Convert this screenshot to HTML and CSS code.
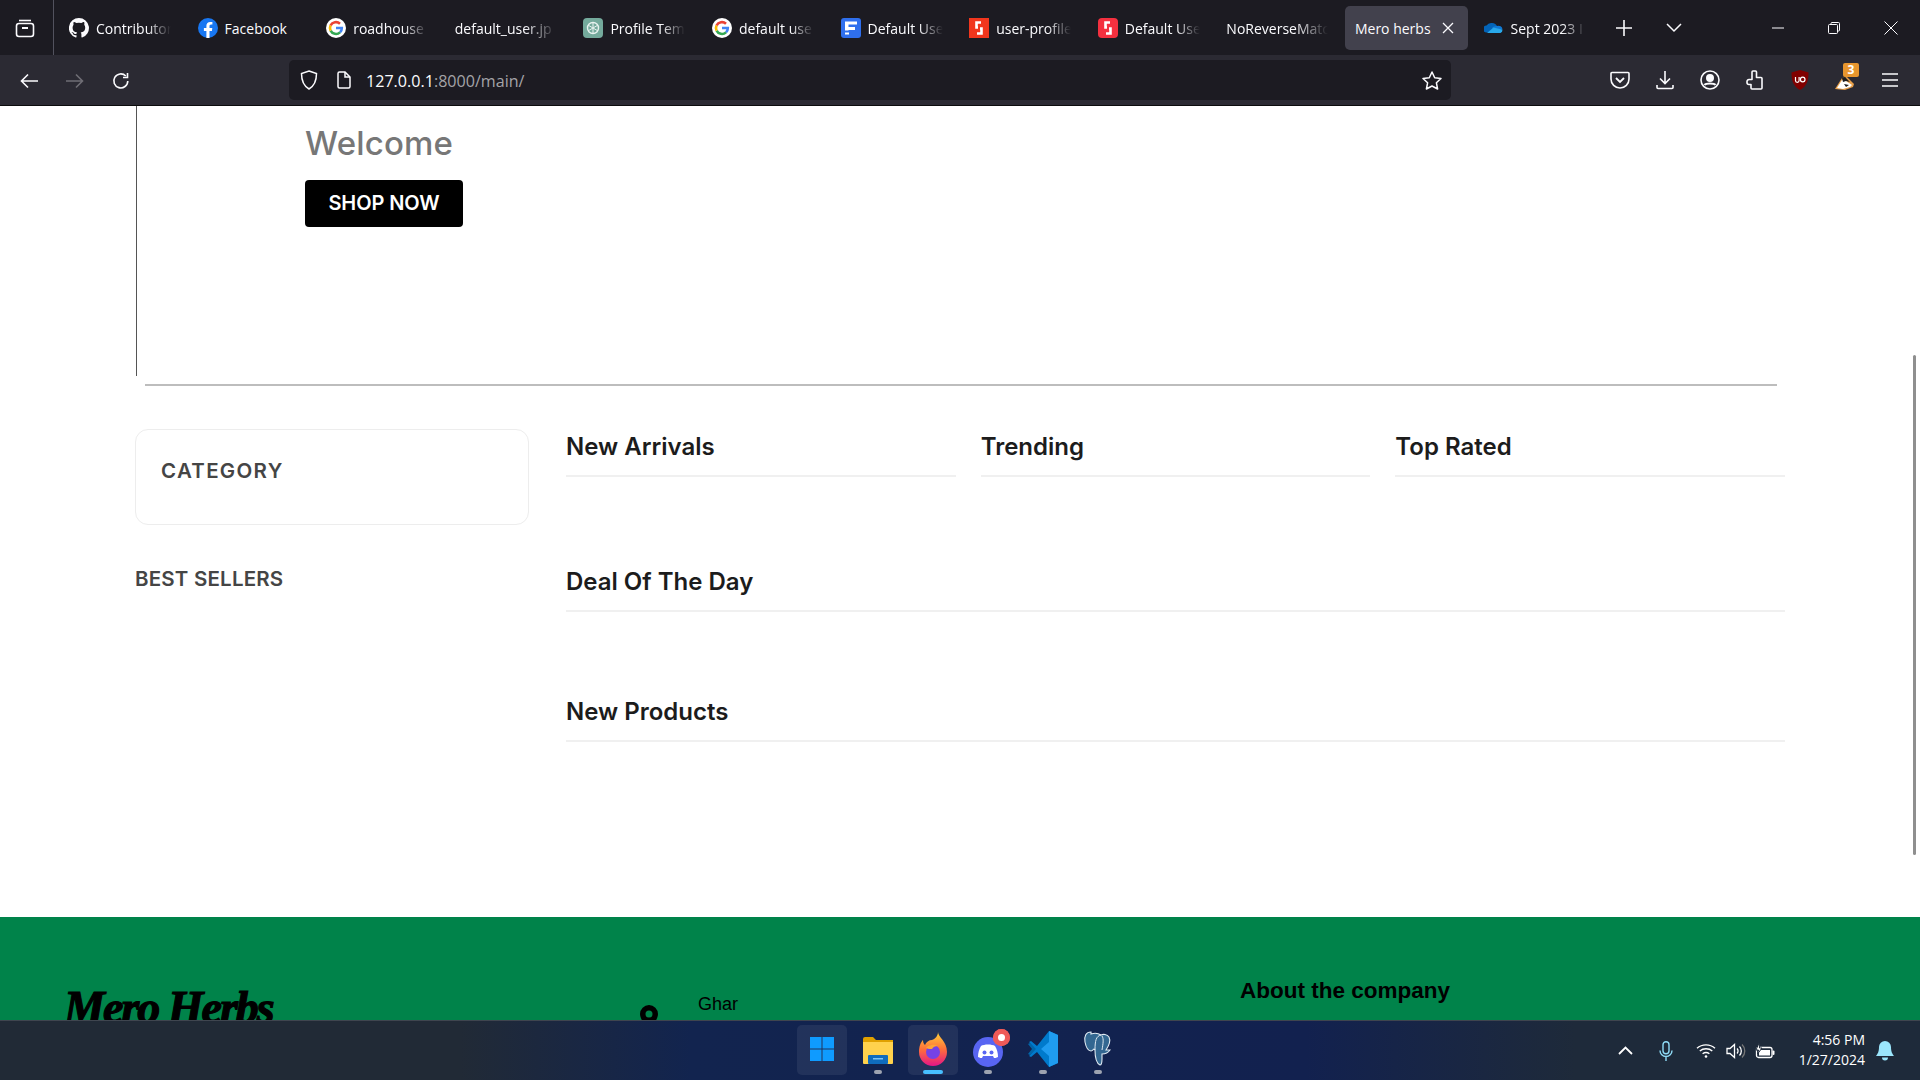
FILE: index.html
```html
<!DOCTYPE html>
<html lang="en">
<head>
<meta charset="utf-8">
<title>Mero herbs</title>
<link rel="stylesheet" href="styles.css">
</head>
<body>
<div class="tabbar">
  <div class="tabs-btn"><svg width="20" height="20" viewBox="0 0 20 20" fill="none" stroke="#fbfbfe" stroke-width="1.6"><path d="M4 2.500h12"/><rect x="1.500" y="5.500" width="17" height="13" rx="2.500"/><path d="M7 10h6" stroke-width="2"/></svg></div>
  <div class="tabs">
    <div class="tab"><svg class="fav" viewBox="0 0 20 20"><path fill="#fbfbfe" d="M10 0a10 10 0 0 0-3.200 19.500c.5.100.7-.2.7-.5v-1.800c-2.800.6-3.400-1.200-3.400-1.200-.4-1.200-1.100-1.500-1.100-1.500-.9-.6.100-.6.100-.6 1 .1 1.500 1 1.500 1 .9 1.500 2.300 1.100 2.900.8.100-.6.300-1.100.6-1.300-2.200-.3-4.500-1.100-4.500-4.900 0-1.100.4-2 1-2.700-.1-.3-.4-1.300.1-2.700 0 0 .8-.3 2.700 1a9.400 9.400 0 0 1 5 0c1.900-1.300 2.700-1 2.700-1 .5 1.400.2 2.400.1 2.700.6.7 1 1.600 1 2.700 0 3.800-2.300 4.600-4.500 4.900.4.300.7.900.7 1.900V19c0 .3.200.6.700.5A10 10 0 0 0 10 0z"/></svg><span class="tab-label">Contributor</span></div>
    <div class="tab"><svg class="fav" viewBox="0 0 20 20"><circle cx="10" cy="10" r="10" fill="#1877f2"/><path fill="#fff" d="M13.900 12.900l.4-2.900h-2.800V8.100c0-.8.4-1.600 1.600-1.600h1.300V4.100s-1.100-.2-2.200-.2c-2.300 0-3.800 1.400-3.800 3.900V10H5.900v2.900h2.500V20h3.100v-7.100z"/></svg><span class="tab-label tab-label-full">Facebook</span></div>
    <div class="tab"><svg class="fav" viewBox="0 0 20 20"><circle cx="10" cy="10" r="10" fill="#fff"/><path fill="none" stroke="#4285f4" stroke-width="2.600" d="M10 10h5.800a6 6 0 0 1-1.800 4.400"/><path fill="none" stroke="#34a853" stroke-width="2.600" d="M14 14.400A6 6 0 0 1 4.600 12.600"/><path fill="none" stroke="#fbbc05" stroke-width="2.600" d="M4.600 12.600a6 6 0 0 1 0-5.200"/><path fill="none" stroke="#ea4335" stroke-width="2.600" d="M4.600 7.400A6 6 0 0 1 14 5.700"/></svg><span class="tab-label">roadhouse</span></div>
    <div class="tab"><span class="tab-label">default_user.jp</span></div>
    <div class="tab"><svg class="fav" viewBox="0 0 20 20"><rect width="20" height="20" rx="4" fill="#74aa9c"/><circle cx="10" cy="10" r="5.500" fill="none" stroke="#e8f3f0" stroke-width="1.400"/><path d="M10 4.500v11M5.200 7.200l9.600 5.600M14.800 7.200l-9.600 5.600" stroke="#e8f3f0" stroke-width="1"/></svg><span class="tab-label">Profile Tem</span></div>
    <div class="tab"><svg class="fav" viewBox="0 0 20 20"><circle cx="10" cy="10" r="10" fill="#fff"/><path fill="none" stroke="#4285f4" stroke-width="2.600" d="M10 10h5.800a6 6 0 0 1-1.800 4.400"/><path fill="none" stroke="#34a853" stroke-width="2.600" d="M14 14.400A6 6 0 0 1 4.600 12.600"/><path fill="none" stroke="#fbbc05" stroke-width="2.600" d="M4.600 12.600a6 6 0 0 1 0-5.200"/><path fill="none" stroke="#ea4335" stroke-width="2.600" d="M4.600 7.400A6 6 0 0 1 14 5.700"/></svg><span class="tab-label">default use</span></div>
    <div class="tab"><svg class="fav" viewBox="0 0 20 20"><rect width="20" height="20" rx="3" fill="#2f6fed"/><path fill="#fff" d="M4 3.500h12v3H7.500v2.500H14v3H7.500v.5H4zM4 14.500h4v2H4z"/></svg><span class="tab-label">Default Use</span></div>
    <div class="tab"><svg class="fav" viewBox="0 0 20 20"><rect width="20" height="20" fill="#f1361d"/><path fill="none" stroke="#fff" stroke-width="2.600" d="M12 4.500H7.500v5H9M8 15.500h4.500v-5H11"/></svg><span class="tab-label">user-profile</span></div>
    <div class="tab"><svg class="fav" viewBox="0 0 20 20"><rect width="20" height="20" rx="4" fill="#f4303f"/><path fill="none" stroke="#fff" stroke-width="2.600" d="M12 4.500H7.500v5H9M8 15.500h4.500v-5H11"/></svg><span class="tab-label">Default Use</span></div>
    <div class="tab"><span class="tab-label">NoReverseMatc</span></div>
    <div class="tab tab-active"><span class="tab-label-active">Mero herbs</span><svg class="tab-close" width="12" height="12" viewBox="0 0 12 12" stroke="#fbfbfe" stroke-width="1.300"><path d="M1 1l10 10M11 1L1 11"/></svg></div>
    <div class="tab"><svg class="fav" viewBox="0 0 20 20"><path fill="#0364b8" d="M8 5a5.500 5.500 0 0 1 5.200 3.500l-5 6H3a3.500 3.500 0 0 1-.5-7A5.500 5.500 0 0 1 8 5z"/><path fill="#0f78d4" d="M13 8a4 4 0 0 1 5.500 3.500L9 14l-.8-4.500A5.500 5.500 0 0 1 13 8z"/><path fill="#28a8ea" d="M3 15h13.500a3.500 3.500 0 0 0 2-3.300L9.500 9.500z"/></svg><span class="tab-label">Sept 2023 I</span></div>
  </div>
  <div class="tab-tools">
    <svg class="tab-plus" width="16" height="16" viewBox="0 0 16 16" stroke="#fbfbfe" stroke-width="1.600"><path d="M8 0v16M0 8h16"/></svg>
    <svg class="tab-chev" width="16" height="10" viewBox="0 0 16 10" fill="none" stroke="#fbfbfe" stroke-width="1.500"><path d="M1 1l7 7 7-7"/></svg>
  </div>
  <div class="win-btns">
    <svg width="12" height="12" viewBox="0 0 12 12" stroke="#fbfbfe" stroke-width="1"><path d="M0 6h12"/></svg>
    <svg width="12" height="12" viewBox="0 0 12 12" fill="none" stroke="#fbfbfe" stroke-width="1"><rect x=".5" y="2.500" width="9" height="9" rx="1"/><path d="M3 2.500V1.500a1 1 0 0 1 1-1h6.500a1 1 0 0 1 1 1V8a1 1 0 0 1-1 1h-1"/></svg>
    <svg width="14" height="14" viewBox="0 0 14 14" stroke="#fbfbfe" stroke-width="1"><path d="M.5.500l13 13M13.500.5l-13 13"/></svg>
  </div>
</div>

<div class="navbar">
  <div class="nav-left">
    <svg width="18" height="16" viewBox="0 0 18 16" fill="none" stroke="#fbfbfe" stroke-width="1.600"><path d="M18 8H1.500M8 1.500L1.500 8 8 14.500"/></svg>
    <svg width="18" height="16" viewBox="0 0 18 16" fill="none" stroke="#6f6e75" stroke-width="1.600"><path d="M0 8h16.500M10 1.500L16.500 8 10 14.500"/></svg>
    <svg width="18" height="18" viewBox="0 0 18 18" fill="none" stroke="#fbfbfe" stroke-width="1.600"><path d="M15.800 9a7 7 0 1 1-2-5"/><path d="M15.500 1v4.500H11"/></svg>
  </div>
  <div class="urlbar">
    <svg width="18" height="20" viewBox="0 0 18 20" fill="none" stroke="#fbfbfe" stroke-width="1.500"><path d="M9 1l7.500 2.500c0 7-1.500 12-7.500 15.500C3 15.500 1.500 10.500 1.500 3.500z"/></svg>
    <svg class="url-page" width="14" height="18" viewBox="0 0 14 18" fill="none" stroke="#fbfbfe" stroke-width="1.500"><path d="M2.500 1h5.500l5 5v9.500a1.500 1.500 0 0 1-1.500 1.500h-9A1.500 1.500 0 0 1 1 15.500v-13A1.500 1.500 0 0 1 2.500 1z"/><path d="M8 1v5h5"/></svg>
    <div class="url-text">127.0.0.1<span class="url-dim">:8000/main/</span></div>
    <svg class="url-star" width="20" height="19" viewBox="0 0 20 19" fill="none" stroke="#fbfbfe" stroke-width="1.500"><path stroke-linejoin="round" d="M10 1l2.700 5.700 6.300.8-4.600 4.300 1.200 6.200L10 15l-5.600 3 1.200-6.200L1 7.500l6.300-.8z"/></svg>
  </div>
  <div class="nav-right">
    <svg class="ni" viewBox="0 0 20 20" fill="none" stroke="#fbfbfe" stroke-width="1.600"><path d="M2 2.500h16a1 1 0 0 1 1 1V9a9 9 0 0 1-18 0V3.500a1 1 0 0 1 1-1z"/><path d="M6 8l4 4 4-4" stroke-width="1.800"/></svg>
    <svg class="ni" viewBox="0 0 20 20" fill="none" stroke="#fbfbfe" stroke-width="1.600"><path d="M10 1v12M5 8.500l5 5 5-5M2 15v2.500a1 1 0 0 0 1 1h14a1 1 0 0 0 1-1V15"/></svg>
    <svg class="ni" viewBox="0 0 20 20" fill="none" stroke="#fbfbfe" stroke-width="1.600"><circle cx="10" cy="10" r="9"/><circle cx="10" cy="8" r="3.200" fill="#fbfbfe"/><path d="M4.500 15c1.500-2 9.500-2 11 0" stroke-width="2"/></svg>
    <svg class="ni" viewBox="0 0 20 20" fill="none" stroke="#fbfbfe" stroke-width="1.600"><path stroke-linejoin="round" d="M8 1h2.500a1 1 0 0 1 1 1v5.500H16a1 1 0 0 1 1 1V18a1 1 0 0 1-1 1H7a1 1 0 0 1-1-1v-3.500H4a2 2 0 0 1-2-2v-1a2 2 0 0 1 2-2h3V2a1 1 0 0 1 1-1z"/></svg>
    <svg class="ni" viewBox="0 0 20 20"><path fill="#800000" d="M10 0l8.500 2.500c0 8-1.500 13.500-8.500 17.500C3 16 1.500 10.500 1.500 2.500z"/><path fill="none" stroke="#fff" stroke-width="1.200" d="M5.500 7v3.500a1.800 1.800 0 0 0 3.600 0V7"/><circle cx="12.700" cy="9.500" r="2.300" fill="none" stroke="#fff" stroke-width="1.200"/></svg>
    <div class="badger">
      <svg class="ni" viewBox="0 0 20 20"><path fill="#e9a04a" d="M0 19L7 8l5-1 7 7-1 3-8 3z"/><path fill="#fff" d="M2 18l5-8 4 1 6 4-2 2-7 2z"/><path fill="#1d1d1d" d="M7 8l3-1 5 5-4-1-3 1zM9 14l5 1-3 2z"/></svg>
      <span class="badger-count">3</span>
    </div>
    <svg class="ni" viewBox="0 0 20 20" stroke="#fbfbfe" stroke-width="1.600"><path d="M2 4h16M2 10h16M2 16h16"/></svg>
  </div>
</div>
<div class="chrome-line"></div>

<div class="viewport">
  <main class="page">
    <section class="hero">
      <h2 class="hero-title">Welcome</h2>
      <a class="hero-btn">SHOP NOW</a>
    </section>
    <hr class="rule">
    <div class="content">
      <aside class="sidebar">
        <div class="cat-card"><h3 class="cat-title">CATEGORY</h3></div>
        <h3 class="best-title">BEST SELLERS</h3>
      </aside>
      <div class="main-col">
        <div class="three">
          <h2 class="sec-title">New Arrivals</h2>
          <h2 class="sec-title">Trending</h2>
          <h2 class="sec-title">Top Rated</h2>
        </div>
        <h2 class="sec-title sec-deal">Deal Of The Day</h2>
        <h2 class="sec-title sec-new">New Products</h2>
      </div>
    </div>
    <footer class="footer">
      <div class="foot-logo">Mero Herbs</div>
      <div class="foot-addr">
        <svg class="pin" width="18" height="26" viewBox="0 0 18 26"><path fill-rule="evenodd" d="M9 0a9 9 0 0 1 9 9c0 6-9 17-9 17S0 15 0 9a9 9 0 0 1 9-9zm0 5.500a3.500 3.500 0 1 0 0 7 3.500 3.500 0 0 0 0-7z"/></svg>
        <span class="foot-text">Ghar</span>
      </div>
      <div class="foot-about">About the company</div>
    </footer>
  </main>
  <div class="scroll-thumb"></div>
</div>

<div class="taskbar">
  <div class="task-center">
    <div class="task-item task-box task-start">
      <svg width="24" height="24" viewBox="0 0 24 24" fill="#0f9bff"><rect width="11.500" height="11.500"/><rect x="12.500" width="11.500" height="11.500"/><rect y="12.500" width="11.500" height="11.500"/><rect x="12.500" y="12.500" width="11.500" height="11.500"/></svg>
    </div>
    <div class="task-item">
      <svg width="30" height="30" viewBox="0 0 30 30"><path fill="#e0a100" d="M0 5a2 2 0 0 1 2-2h8l3 3h17v20H0z"/><path fill="#ffd24d" d="M0 8h30v21a1 1 0 0 1-1 1H1a1 1 0 0 1-1-1z"/><rect x="5" y="21" width="20" height="9" fill="#0f6cbd" rx="1"/><rect x="10" y="24" width="10" height="1.500" fill="#7cc4f5"/></svg>
      <span class="dot"></span>
    </div>
    <div class="task-item task-box">
      <svg width="30" height="34" viewBox="0 0 30 34"><defs><linearGradient id="ff" x1="0" y1="0" x2="0" y2="1"><stop offset="0" stop-color="#ffd23a"/><stop offset=".5" stop-color="#ff7139"/><stop offset="1" stop-color="#e31587"/></linearGradient></defs><path fill="url(#ff)" d="M20 0c0 5 9 9 9 20a14 14 0 0 1-28 0C1 14 3 10 5 8c0 3 1 4 2 5 1-3 4-5 7-5 3-1 6-4 6-8z"/><circle cx="15" cy="20" r="7" fill="#7542e5"/><path fill="#ffa436" d="M8 16c3-4 9-4 12-2-3 0-5 1-6 3-2 0-4 0-6-1z"/></svg>
      <span class="dot dot-active"></span>
    </div>
    <div class="task-item">
      <svg width="30" height="36" viewBox="0 0 30 36"><circle cx="15" cy="21" r="15" fill="#5865f2"/><path fill="#fff" d="M8 15c3-2 11-2 14 0 2 3 3 7 3 11-2 1-3 1-4 1l-1-2H10l-1 2c-1 0-2 0-4-1 0-4 1-8 3-11z"/><circle cx="11.500" cy="21.500" r="2" fill="#5865f2"/><circle cx="18.500" cy="21.500" r="2" fill="#5865f2"/></svg>
      <span class="notif"></span>
      <span class="dot"></span>
    </div>
    <div class="task-item">
      <svg width="30" height="36" viewBox="0 0 30 36"><path fill="#0065a9" d="M0 13l2-1 7 6-7 6-2-1 4-5z"/><path fill="#007acc" d="M21 0l9 4v28l-9 4L9 21 3 26l-2-1 7-7-7-7 2-1 6 5z"/><path fill="#1f9cf0" d="M21 0l9 4v28l-9 4V25l-8-7 8-7z"/></svg>
      <span class="dot"></span>
    </div>
    <div class="task-item">
      <svg width="30" height="36" viewBox="0 0 30 36"><path fill="#336791" stroke="#dfe9f2" stroke-width="1.100" d="M8 1C3 1 1 5 2 11c1 5 3 9 6 9 2 0 2-2 3-2l1 1c0 6 1 13 5 15 2 0 2-3 2-6v-5c3 0 6-1 8-4h-4c2-3 5-9 3-13-2-3-6-3-8-2-3-2-7-2-10-1z"/><path fill="none" stroke="#dfe9f2" stroke-width="1" d="M18 4c-5 1-6 6-6 15M19 5c2 3 1 8 0 14"/></svg>
      <span class="dot"></span>
    </div>
  </div>
  <div class="tray">
    <svg class="chevron-up" width="15" height="9" viewBox="0 0 15 9" fill="none" stroke="#fff" stroke-width="1.800"><path d="M1 8l6.500-6.500L14 8"/></svg>
    <svg class="mic" width="14" height="20" viewBox="0 0 14 20" fill="none" stroke="#8fdcf7" stroke-width="1.400"><rect x="4" y=".7" width="6" height="12" rx="3"/><path d="M1 9.500a6 6 0 0 0 12 0M7 15.500V20"/></svg>
    <svg class="wifi" width="20" height="15" viewBox="0 0 20 15" fill="none" stroke="#fff" stroke-width="1.400"><path d="M1 5.200c5-4.500 13-4.500 18 0M3.800 8c3.500-3 9-3 12.500 0M6.600 10.800c2-1.500 4.800-1.500 6.800 0"/><circle cx="10" cy="13.500" r="1.300" fill="#fff" stroke="none"/></svg>
    <svg class="vol" width="20" height="16" viewBox="0 0 20 16" fill="none" stroke="#fff" stroke-width="1.300"><path d="M1 5.500h3L8.500 1.500v13L4 10.500H1z"/><path d="M11 5.500a3.500 3.500 0 0 1 0 5M13.500 3.500a6.500 6.500 0 0 1 0 9"/><path stroke="#777" d="M16 1.500a9 9 0 0 1 0 13"/></svg>
    <svg class="batt" width="20" height="16" viewBox="0 0 20 16"><rect x="1.500" y="4.500" width="15.500" height="10" rx="2" fill="#1e2a3a" stroke="#fff" stroke-width="1.300"/><rect x="4" y="7" width="11" height="5.500" fill="#fff"/><rect x="17.500" y="7.500" width="2" height="4.500" rx="1" fill="#fff"/><path fill="#fff" stroke="#1e2a3a" d="M4 0L1 7h2.500L2.500 11 7 5H4.500z"/></svg>
    <div class="clock"><div>4:56 PM</div><div>1/27/2024</div></div>
    <svg class="bell" width="18" height="20" viewBox="0 0 18 20" fill="#9be6fc"><path d="M9 0a6 6 0 0 1 6 6c0 5 1.500 7 3 9H0c1.500-2 3-4 3-9a6 6 0 0 1 6-6zM6 16.500h6a3 3 0 0 1-6 0z"/></svg>
  </div>
</div>
</body>
</html>
```
FILE: styles.css
```css
* { box-sizing: border-box; }
html, body { margin: 0; height: 100%; overflow: hidden; }
body { display: flex; flex-direction: column; background: #fff; font-family: "Open Sans", "Liberation Sans", sans-serif; }
svg { display: block; flex: none; }

.tabbar { height: 55px; flex: none; display: flex; align-items: flex-start; background: #1c1b22; color: #fbfbfe; }
.tabs-btn { width: 54px; height: 55px; flex: none; display: flex; align-items: center; justify-content: center; padding-right: 4px; border-right: 1px solid #52525e; }
.tabs { display: flex; gap: 5.600px; margin-left: 5px; width: 1538px; flex: none; }
.tab { width: 123px; height: 44px; margin-top: 6px; flex: none; display: flex; align-items: center; gap: 7px; padding-left: 10px; font-size: 14px; overflow: hidden; border-radius: 5px; }
.fav { width: 20px; height: 20px; flex: none; }
.tab-label { white-space: nowrap; overflow: hidden; flex: 1; margin-right: 11px; -webkit-mask-image: linear-gradient(to right, #000 68%, transparent 100%); mask-image: linear-gradient(to right, #000 68%, transparent 100%); }
.tab-label-full { -webkit-mask-image: none; mask-image: none; }
.tab-active { background: #42414d; justify-content: space-between; padding-right: 14px; }
.tab-label-active { white-space: nowrap; }
.tab-tools { display: flex; align-items: center; height: 55px; margin-left: -1px; }
.tab-plus { margin-left: 20px; }
.tab-chev { margin-left: 34px; }
.win-btns { display: flex; align-items: center; height: 55px; margin-left: auto; gap: 44px; padding-right: 22px; }

.navbar { height: 50px; flex: none; display: flex; align-items: center; background: #2b2a33; }
.nav-left { display: flex; align-items: center; width: 289px; padding: 1px 0 0 20px; gap: 28px; flex: none; }
.urlbar { width: 1162px; height: 40px; flex: none; display: flex; align-items: center; background: #1c1b22; border-radius: 5px; padding: 0 9px 0 11px; color: #fbfbfe; }
.url-page { margin-left: 19px; }
.url-text { margin-left: 15px; padding-top: 2px; font-size: 16.100px; flex: 1; }
.url-dim { color: #a4a4a8; }
.nav-right { display: flex; align-items: center; gap: 25px; margin-left: 159px; }
.ni { width: 20px; height: 20px; }
.badger { position: relative; }
.badger-count { position: absolute; top: -7px; right: -4px; width: 16px; height: 14px; background: #e8962e; border-radius: 2px; color: #fff; font-size: 12px; font-weight: 700; line-height: 14px; text-align: center; }
.chrome-line { height: 1px; flex: none; background: #0c0c0d; }

.viewport { flex: 1; min-height: 0; overflow: hidden; position: relative; }
.scroll-thumb { position: absolute; right: 4px; top: 249px; width: 3px; height: 500px; background: #8f8f8f; border-radius: 2px; }
.page { font-family: Inter, "Open Sans", sans-serif; }
.hero { margin-left: 136px; height: 270px; border-left: 1px solid #555; padding: 17px 0 0 168px; display: flex; flex-direction: column; align-items: flex-start; }
.hero-title { margin: 0; font-size: 33px; line-height: 40px; font-weight: 500; letter-spacing: .2px; color: #777; }
.hero-btn { margin-top: 17px; width: 158px; height: 47px; background: #000; color: #fff; border-radius: 4px; font-size: 20px; font-weight: 600; line-height: 46px; letter-spacing: -.1px; text-align: center; }
.rule { margin: 8px 143px 0 145px; border: 0; border-top: 2px solid #bdbdbd; height: 0; }
.content { display: flex; margin: 43px 135px 0; gap: 37px; height: 488px; }
.sidebar { width: 394px; flex: none; }
.cat-card { height: 96px; border: 1px solid #ededed; border-radius: 13px; padding: 27px 25px 0; }
.cat-title, .best-title { margin: 0; font-size: 20.500px; line-height: 28px; font-weight: 600; color: #454545; }
.cat-title { letter-spacing: 1.300px; }
.best-title { margin-top: 40px; letter-spacing: .2px; }
.main-col { flex: 1; min-width: 0; }
.three { display: flex; gap: 25px; }
.three .sec-title { flex: 1; }
.sec-title { margin: 0; height: 48px; border-bottom: 2px solid #f0f0f0; font-size: 24px; line-height: 30px; padding-top: 3px; font-weight: 600; color: #1c1c1c; }
.sec-deal { margin-top: 87px; }
.sec-new { margin-top: 82px; }
.footer { background: #00834a; height: 300px; display: flex; color: #000; }
.foot-logo { width: 640px; padding: 65px 0 0 64px; font: italic 700 46px/52px "Liberation Serif", serif; letter-spacing: -2px; -webkit-text-stroke: 1.200px #000; flex: none; white-space: nowrap; }
.foot-addr { width: 600px; flex: none; display: flex; padding-top: 75px; }
.pin { margin-top: 13px; }
.foot-text { margin: 0 0 0 40px; font: 18px/24px "Liberation Sans", sans-serif; }
.foot-about { padding-top: 59px; font: 700 22.500px/30px "Liberation Sans", sans-serif; flex: none; }

.taskbar { height: 60px; flex: none; position: relative; display: flex; align-items: center; border-top: 1px solid #3f454f; background: linear-gradient(to right, #212a36 0%, #212a36 24%, #12244f 36%, #12214f 68%, #1e2a3a 82%, #1e2a3a 100%); z-index: 2; }
.task-center { position: absolute; left: 797px; top: 4px; display: flex; gap: 5px; }
.task-start { margin-right: 1px; }
.task-item { position: relative; width: 50px; height: 50px; padding-bottom: 3px; display: flex; align-items: center; justify-content: center; border-radius: 5px; }
.task-box { background: rgba(255,255,255,.07); }
.dot { position: absolute; bottom: 1px; left: 50%; width: 8px; height: 4px; margin-left: -4px; background: #9da3b0; border-radius: 2px; }
.dot-active { width: 20px; margin-left: -10px; background: #47bfff; }
.notif { position: absolute; top: 4px; right: 3px; width: 17px; height: 17px; border-radius: 50%; background: #ee5a58; box-shadow: inset 0 0 0 4px #ee5a58; }
.notif::after { content: ""; position: absolute; left: 5px; top: 5px; width: 7px; height: 7px; border-radius: 50%; background: #fff; }
.tray { position: absolute; right: 0; top: 0; bottom: 0; display: flex; align-items: center; color: #fff; padding-right: 26px; }
.chevron-up { margin-right: 26px; }
.mic { margin-right: 23px; }
.wifi { margin-right: 10px; }
.vol { margin-right: 9px; }
.batt { margin-right: 24px; }
.clock { font-size: 14px; line-height: 20px; text-align: right; margin-top: -2px; }
.bell { margin-left: 11px; }
```
